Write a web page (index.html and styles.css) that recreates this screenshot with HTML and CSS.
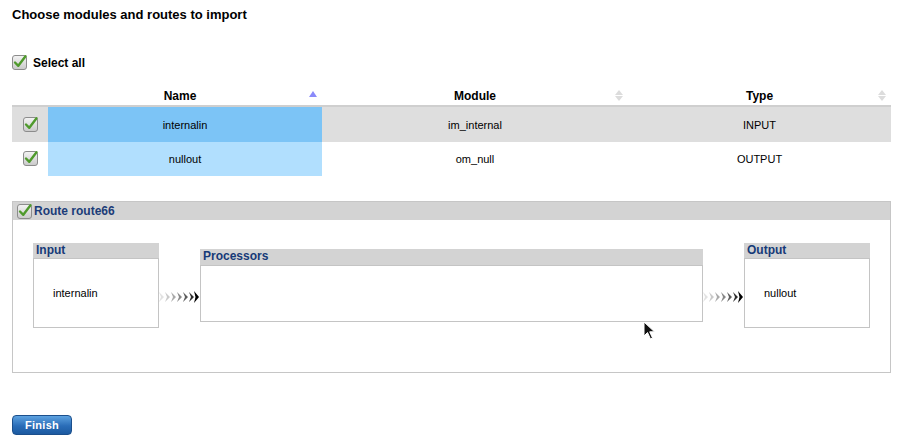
FILE: index.html
```html
<!DOCTYPE html>
<html lang="en">
<head>
    <meta charset="UTF-8">
    <title>Import</title>
    <link rel="stylesheet" href="styles.css">
</head>
<body>
    <h1 class="page-title">Choose modules and routes to import</h1>

    <label class="select-all">
        <svg class="check" width="16" height="16" viewBox="0 0 16 16"><use href="#chk"/></svg>
        <span>Select all</span>
    </label>

    <table class="grid">
        <colgroup>
            <col style="width:36px">
            <col style="width:274px">
            <col style="width:306px">
            <col>
        </colgroup>
        <thead>
            <tr>
                <th></th>
                <th class="sorted">Name<span class="sort asc"></span></th>
                <th>Module<span class="sort both"></span></th>
                <th>Type<span class="sort both"></span></th>
            </tr>
        </thead>
        <tbody>
            <tr class="odd">
                <td class="cb"><svg class="check" width="16" height="16" viewBox="0 0 16 16"><use href="#chk"/></svg></td>
                <td class="name">internalin</td>
                <td>im_internal</td>
                <td>INPUT</td>
            </tr>
            <tr class="even">
                <td class="cb"><svg class="check" width="16" height="16" viewBox="0 0 16 16"><use href="#chk"/></svg></td>
                <td class="name">nullout</td>
                <td>om_null</td>
                <td>OUTPUT</td>
            </tr>
        </tbody>
    </table>

    <div class="route">
        <div class="route-head">
            <svg class="check" width="16" height="16" viewBox="0 0 16 16"><use href="#chk"/></svg>
            <span>Route route66</span>
        </div>
        <div class="route-body">
            <div class="box side">
                <div class="box-head">Input</div>
                <div class="box-body">internalin</div>
            </div>
            <svg class="flow" width="41" height="12" viewBox="0 0 41 12"><use href="#arrows"/></svg>
            <div class="box proc">
                <div class="box-head">Processors</div>
                <div class="box-body"></div>
            </div>
            <svg class="flow" width="41" height="12" viewBox="0 0 41 12"><use href="#arrows"/></svg>
            <div class="box side">
                <div class="box-head">Output</div>
                <div class="box-body">nullout</div>
            </div>
        </div>
    </div>

    <button class="finish" type="button">Finish</button>

    <svg class="cursor" width="13" height="20" viewBox="0 0 13 20">
        <path d="M1 1 L1 15 L4.5 11.5 L7.5 18 L9.5 17 L6.7 10.8 L11.5 10.8 Z" fill="#111" stroke="#fff" stroke-width="1"/>
    </svg>

    <svg width="0" height="0" style="position:absolute">
        <defs>
            <linearGradient id="boxg" x1="0" y1="0" x2="0" y2="1">
                <stop offset="0" stop-color="#f4f4f4"/>
                <stop offset="1" stop-color="#c9c9c9"/>
            </linearGradient>
            <g id="chk">
                <rect x="0.5" y="1.5" width="14" height="14" rx="2.5" fill="url(#boxg)" stroke="#8c8c8c"/>
                <path d="M3 8.5 L6.3 11.8 L13.5 2.2" fill="none" stroke="#4f9a2c" stroke-width="2.4" stroke-linecap="round" stroke-linejoin="round"/>
            </g>
            <g id="arrows">
                <path d="M0 1 L5 6 L0 11 L2 6 Z" fill="#e2e2e2"/>
                <path d="M6 1 L11 6 L6 11 L8 6 Z" fill="#cacaca"/>
                <path d="M12 1 L17 6 L12 11 L14 6 Z" fill="#aaaaaa"/>
                <path d="M18 1 L23 6 L18 11 L20 6 Z" fill="#888"/>
                <path d="M24 1 L29 6 L24 11 L26 6 Z" fill="#5c5c5c"/>
                <path d="M30 1 L35 6 L30 11 L32 6 Z" fill="#2e2e2e"/>
                <path d="M35 0 L40 6 L35 12 L36.5 6 Z" fill="#000"/>
            </g>
        </defs>
    </svg>
</body>
</html>
```

FILE: styles.css
```css
body {
    margin: 0;
    padding: 0 10px 0 12px;
    font-family: 'Liberation Sans', Arial, sans-serif;
    font-size: 11px;
    color: #000;
    background-color: #fff;
    position: relative;
    height: 444px;
    overflow: hidden;
}

.page-title {
    font-size: 13px;
    font-weight: bold;
    margin: 0;
    padding-top: 7px;
    line-height: 16px;
}

.select-all {
    display: flex;
    align-items: center;
    gap: 5px;
    margin-top: 31px;
    height: 18px;
    font-size: 12px;
    font-weight: bold;
}

.select-all .check {
    margin-top: -3px;
}

.grid {
    width: 879px;
    border-collapse: collapse;
    table-layout: fixed;
    margin-top: 14px;
}

.grid th {
    position: relative;
    height: 19px;
    padding: 0;
    font-size: 12px;
    font-weight: bold;
    text-align: center;
    border-bottom: 2px solid #cfcfcf;
}

.grid th.sorted {
    padding-right: 10px;
}

.sort {
    position: absolute;
    right: 4px;
    top: 4px;
    width: 9px;
    height: 12px;
}

.sort.asc::before {
    content: "";
    position: absolute;
    left: 0;
    top: 1px;
    border-left: 4px solid transparent;
    border-right: 4px solid transparent;
    border-bottom: 6px solid #8a8afa;
}

.sort.both::before,
.sort.both::after {
    content: "";
    position: absolute;
    left: 0;
    border-left: 4px solid transparent;
    border-right: 4px solid transparent;
}

.sort.both::before {
    top: 0;
    border-bottom: 5px solid #dcdcdc;
}

.sort.both::after {
    top: 6px;
    border-top: 5px solid #dcdcdc;
}

.grid td {
    height: 34px;
    padding: 0;
    text-align: center;
    font-size: 11px;
}

.grid tr.odd td {
    background-color: #dedede;
    height: 35px;
}

.grid tr.odd td.name {
    background-color: #7cc4f6;
}

.grid tr.even td.name {
    background-color: #b1dffe;
}

.grid td.cb .check {
    display: block;
    margin: -2px 0 0 11px;
}

.route {
    margin-top: 25px;
    width: 877px;
    border: 1px solid #c6c6c6;
}

.route-head {
    display: flex;
    align-items: center;
    gap: 1px;
    height: 18px;
    padding-left: 4px;
    background-color: #d3d3d3;
    font-size: 12px;
    font-weight: bold;
    color: #1b3c78;
}

.route-body {
    display: flex;
    align-items: center;
    padding: 23px 20px 44px 20px;
}

.box {
    display: flex;
    flex-direction: column;
}

.box-head {
    background-color: #d3d3d3;
    color: #163a78;
    font-size: 12px;
    font-weight: bold;
    height: 15px;
    line-height: 15px;
    padding-left: 3px;
}

.box-body {
    border: 1px solid #c4c4c4;
    background-color: #fff;
}

.side {
    width: 126px;
}

.side .box-body {
    height: 68px;
    padding-left: 19px;
    display: flex;
    align-items: center;
}

.proc {
    width: 503px;
}

.proc .box-head {
    height: 16px;
}

.proc .box-body {
    height: 55px;
}

.flow {
    flex: none;
    align-self: flex-start;
    margin-top: 48px;
}

.finish {
    display: block;
    margin-top: 42px;
    width: 60px;
    height: 20px;
    padding: 0;
    border: 1px solid #1b4f8c;
    border-radius: 4px;
    background: linear-gradient(#5da2e0, #2a6db8 55%, #1c5aa0);
    color: #fff;
    font-family: 'Liberation Sans', Arial, sans-serif;
    font-size: 11px;
    font-weight: bold;
    letter-spacing: 0.3px;
}

.cursor {
    position: absolute;
    left: 643px;
    top: 321px;
}
```
